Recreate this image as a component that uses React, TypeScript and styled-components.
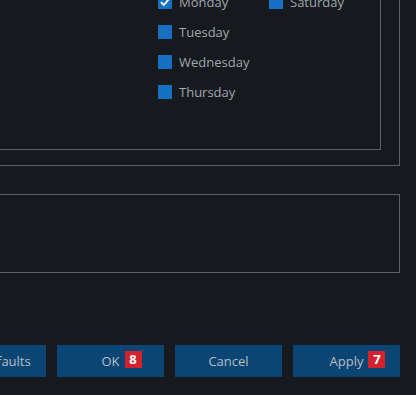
import React from 'react';
import styled, { createGlobalStyle } from 'styled-components';

const GlobalStyle = createGlobalStyle`
  html, body {
    margin: 0;
    padding: 0;
    background: #16191d;
    overflow: hidden;
  }
  body {
    font-family: "Open Sans", "Liberation Sans", sans-serif;
  }
`;

const Dialog = styled.div`
  width: 600px;
  height: 395px;
  margin-left: -200px;
  display: flex;
  flex-direction: column;
`;

const GroupBox = styled.div`
  margin-top: -40px;
  border: 1px solid #5d6167;
  padding: 0 18px 15px 8px;
`;

const InnerBox = styled.div`
  border: 1px solid #5d6167;
  border-top: none;
  padding: 26px 0 42px 0;
  display: flex;
  justify-content: flex-end;
`;

const DaysGrid = styled.div`
  display: grid;
  grid-template-columns: 111px 111px;
  grid-template-rows: repeat(4, 30px);
  grid-auto-flow: column;
`;

const DayRow = styled.label`
  display: flex;
  align-items: center;
  gap: 7px;
  font-size: 13px;
  color: #a1a7ae;
  font-weight: 500;
`;

const Box = styled.span`
  width: 14px;
  height: 14px;
  background: #1670c2;
  display: flex;
  align-items: center;
  justify-content: center;
  flex-shrink: 0;
`;

const NotesBox = styled.div`
  margin-top: 28px;
  height: 77px;
  border: 1px solid #5d6167;
`;

const ButtonBar = styled.div`
  margin-top: 72px;
  display: flex;
  justify-content: flex-end;
  gap: 11px;
`;

const Button = styled.button<{ $width?: number }>`
  width: ${p => p.$width ?? 107}px;
  height: 32px;
  border: none;
  background: #0b4573;
  color: #b6bec7;
  font-family: "Open Sans", "Liberation Sans", sans-serif;
  font-size: 13px;
  font-weight: 500;
  padding: 0;
  display: flex;
  align-items: center;
  justify-content: center;
`;

const Label = styled.span`
  position: relative;
`;

const Badge = styled.span`
  position: absolute;
  left: calc(100% + 5px);
  top: -1px;
  width: 17px;
  height: 17px;
  background: #d3222d;
  color: #ffffff;
  font-weight: 700;
  font-size: 13px;
  line-height: 17px;
  text-align: center;
`;

const days: { name: string; checked?: boolean }[] = [
  { name: 'Monday', checked: true },
  { name: 'Tuesday' },
  { name: 'Wednesday' },
  { name: 'Thursday' },
  { name: 'Saturday' },
];

const Check = () => (
  <svg width="12" height="12" viewBox="0 0 12 12">
    <path d="M2 6.2 L4.8 9 L10 3" fill="none" stroke="#ffffff" strokeWidth="1.8" />
  </svg>
);

const App: React.FC = () => {
  const buttons: { text: string; badge?: string; width?: number }[] = [
    { text: 'Defaults', width: 81 },
    { text: 'OK', badge: '8' },
    { text: 'Cancel' },
    { text: 'Apply', badge: '7' },
  ];

  return (
    <>
      <GlobalStyle />
      <Dialog>
        <GroupBox>
          <InnerBox>
            <DaysGrid>
              {days.map(d => (
                <DayRow key={d.name}>
                  <Box>{d.checked && <Check />}</Box>
                  {d.name}
                </DayRow>
              ))}
            </DaysGrid>
          </InnerBox>
        </GroupBox>
        <NotesBox />
        <ButtonBar>
          {buttons.map(b => (
            <Button key={b.text} $width={b.width}>
              <Label>
                {b.text}
                {b.badge && <Badge>{b.badge}</Badge>}
              </Label>
            </Button>
          ))}
        </ButtonBar>
      </Dialog>
    </>
  );
};

export default App;
